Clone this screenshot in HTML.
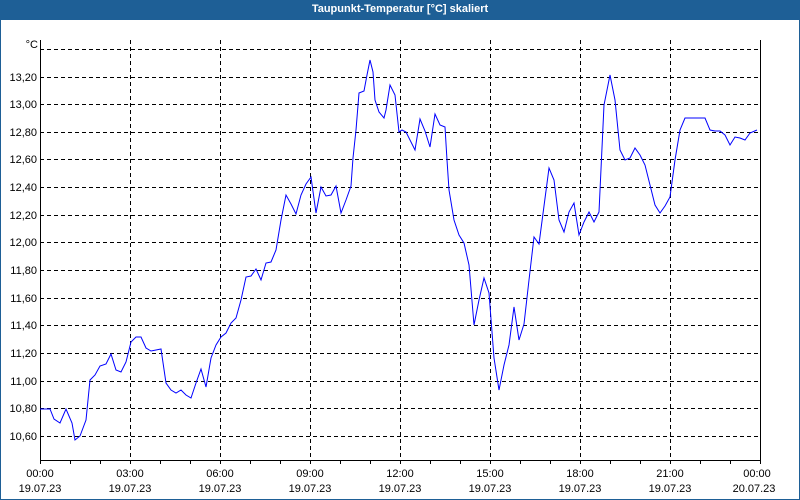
<!DOCTYPE html>
<html><head><style>
html,body{margin:0;padding:0;}
body{width:800px;height:500px;position:relative;background:#fff;font-family:"Liberation Sans",Tahoma,sans-serif;overflow:hidden;}
#frame{position:absolute;left:0;top:0;width:798px;height:498px;border:1px solid #1e5f96;}
#title{position:absolute;left:0;top:0;width:800px;height:20px;background:#1e5f96;color:#fff;font-size:11px;font-weight:bold;text-align:center;line-height:19px;}
svg{position:absolute;left:0;top:0;}
svg text{font-family:"Liberation Sans",Tahoma,sans-serif;font-size:11px;fill:#000;}
</style></head><body>
<div id="frame"></div>
<div id="title">Taupunkt-Temperatur [°C] skaliert</div>
<svg width="800" height="500">
<g stroke="#000" stroke-width="1" stroke-dasharray="4,3" fill="none">
<line x1="40" y1="49.5" x2="760" y2="49.5"/>
<line x1="40" y1="77.5" x2="760" y2="77.5"/>
<line x1="40" y1="104.5" x2="760" y2="104.5"/>
<line x1="40" y1="132.5" x2="760" y2="132.5"/>
<line x1="40" y1="159.5" x2="760" y2="159.5"/>
<line x1="40" y1="187.5" x2="760" y2="187.5"/>
<line x1="40" y1="215.5" x2="760" y2="215.5"/>
<line x1="40" y1="242.5" x2="760" y2="242.5"/>
<line x1="40" y1="270.5" x2="760" y2="270.5"/>
<line x1="40" y1="298.5" x2="760" y2="298.5"/>
<line x1="40" y1="325.5" x2="760" y2="325.5"/>
<line x1="40" y1="353.5" x2="760" y2="353.5"/>
<line x1="40" y1="381.5" x2="760" y2="381.5"/>
<line x1="40" y1="408.5" x2="760" y2="408.5"/>
<line x1="40" y1="436.5" x2="760" y2="436.5"/>
<line x1="130.5" y1="40" x2="130.5" y2="460"/>
<line x1="220.5" y1="40" x2="220.5" y2="460"/>
<line x1="310.5" y1="40" x2="310.5" y2="460"/>
<line x1="400.5" y1="40" x2="400.5" y2="460"/>
<line x1="490.5" y1="40" x2="490.5" y2="460"/>
<line x1="580.5" y1="40" x2="580.5" y2="460"/>
<line x1="670.5" y1="40" x2="670.5" y2="460"/>
</g>
<g stroke="#000" stroke-width="1" fill="none">
<polyline points="40.5,40 40.5,460.5 760.5,460.5 760.5,40"/>
<path d="M40.5 460v4M70.5 460v4M100.5 460v4M130.5 460v4M160.5 460v4M190.5 460v4M220.5 460v4M250.5 460v4M280.5 460v4M310.5 460v4M340.5 460v4M370.5 460v4M400.5 460v4M430.5 460v4M460.5 460v4M490.5 460v4M520.5 460v4M550.5 460v4M580.5 460v4M610.5 460v4M640.5 460v4M670.5 460v4M700.5 460v4M730.5 460v4M760.5 460v4"/>
</g>
<g text-anchor="end">
<text x="38" y="48">°C</text>
<text x="37" y="81">13,20</text>
<text x="37" y="108">13,00</text>
<text x="37" y="136">12,80</text>
<text x="37" y="163">12,60</text>
<text x="37" y="191">12,40</text>
<text x="37" y="219">12,20</text>
<text x="37" y="246">12,00</text>
<text x="37" y="274">11,80</text>
<text x="37" y="302">11,60</text>
<text x="37" y="329">11,40</text>
<text x="37" y="357">11,20</text>
<text x="37" y="385">11,00</text>
<text x="37" y="412">10,80</text>
<text x="37" y="440">10,60</text>
</g>
<g text-anchor="middle">
<text x="40" y="477">00:00</text><text x="40" y="492">19.07.23</text>
<text x="130" y="477">03:00</text><text x="130" y="492">19.07.23</text>
<text x="220" y="477">06:00</text><text x="220" y="492">19.07.23</text>
<text x="310" y="477">09:00</text><text x="310" y="492">19.07.23</text>
<text x="400" y="477">12:00</text><text x="400" y="492">19.07.23</text>
<text x="490" y="477">15:00</text><text x="490" y="492">19.07.23</text>
<text x="580" y="477">18:00</text><text x="580" y="492">19.07.23</text>
<text x="670" y="477">21:00</text><text x="670" y="492">19.07.23</text>
<text x="757" y="477">00:00</text><text x="754" y="492">20.07.23</text>
</g>
<polyline fill="none" stroke="#0000ff" stroke-width="1" points="40,409 50,409 54,419 60,423 66,409 72,423 75,440 80,436 86,420 90,380 95,375 100,366 106,364 111,354 116,370 121,372 126,362 131,342 136,337 141,337 146,348 151,351 156,350 161,349 166,383 171,390 176,393 181,390 186,395 191,398 196,383 201,369 206,387 211,358 216,345 221,337 226,333 231,323 236,318 241,300 246,277 251,276 256,269 261,280 266,263 271,262 276,250 281,220 286,195 291,204 296,214 301,195 306,184 311,177 316,213 321,187 326,196 331,195 336,186 341,213 346,200 351,186 353,158 356,130 359,93 364,91 367,75 370,60 373,72 375,100 379,112 384,118 386,110 390,85 395,95 399,132 402,130 406,132 415,150 420,119 425,131 430,147 435,114 440,125 445,127 447,160 449,190 454,220 459,235 464,243 469,265 474,325 479,300 484,278 489,293 494,358 499,390 504,365 509,345 514,307 519,340 524,324 529,280 534,237 539,244 544,206 549,168 554,180 559,220 564,232 569,212 574,203 579,235 584,222 589,212 594,222 599,212 604,105 610,75 615,100 620,150 625,160 630,158 635,148 640,155 645,165 650,185 655,205 660,213 665,206 670,197 675,160 680,130 685,118 690,118 700,118 705,118 710,130 715,131 720,131 725,135 730,145 735,137 740,138 745,140 750,133 757,130"/>
</svg>
</body></html>
